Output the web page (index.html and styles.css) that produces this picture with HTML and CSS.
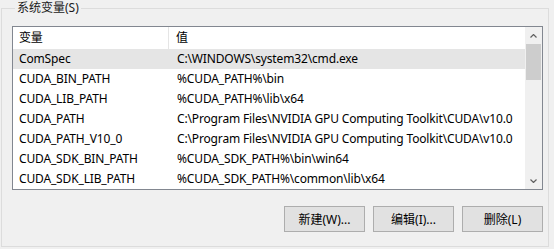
FILE: index.html
```html
<!DOCTYPE html>
<html lang="zh-CN">

<head>
  <meta charset="UTF-8">
  <meta name="viewport" content="width=device-width, initial-scale=1.0">
  <title>系统变量</title>
  <link rel="stylesheet" href="styles.css">
</head>

<body>
  <fieldset class="group">
    <legend>系统变量(S)</legend>

    <div class="list">
      <div class="view">
        <div class="row head">
          <div class="cell name">变量</div>
          <div class="cell value">值</div>
        </div>
        <div class="row selected">
          <div class="cell name">ComSpec</div>
          <div class="cell value">C:\WINDOWS\system32\cmd.exe</div>
        </div>
        <div class="row">
          <div class="cell name">CUDA_BIN_PATH</div>
          <div class="cell value">%CUDA_PATH%\bin</div>
        </div>
        <div class="row">
          <div class="cell name">CUDA_LIB_PATH</div>
          <div class="cell value">%CUDA_PATH%\lib\x64</div>
        </div>
        <div class="row">
          <div class="cell name">CUDA_PATH</div>
          <div class="cell value">C:\Program Files\NVIDIA GPU Computing Toolkit\CUDA\v10.0</div>
        </div>
        <div class="row">
          <div class="cell name">CUDA_PATH_V10_0</div>
          <div class="cell value">C:\Program Files\NVIDIA GPU Computing Toolkit\CUDA\v10.0</div>
        </div>
        <div class="row">
          <div class="cell name">CUDA_SDK_BIN_PATH</div>
          <div class="cell value">%CUDA_SDK_PATH%\bin\win64</div>
        </div>
        <div class="row">
          <div class="cell name">CUDA_SDK_LIB_PATH</div>
          <div class="cell value">%CUDA_SDK_PATH%\common\lib\x64</div>
        </div>
      </div>

      <div class="scrollbar">
        <div class="arrow">
          <svg width="7" height="4" viewBox="0 0 7 4"><path d="M0.5 3.5 L3.5 0.5 L6.5 3.5" fill="none" stroke="#606060" stroke-width="1.2"/></svg>
        </div>
        <div class="track">
          <div class="thumb"></div>
        </div>
        <div class="arrow">
          <svg width="7" height="4" viewBox="0 0 7 4"><path d="M0.5 0.5 L3.5 3.5 L6.5 0.5" fill="none" stroke="#606060" stroke-width="1.2"/></svg>
        </div>
      </div>
    </div>

    <div class="buttons">
      <button type="button">新建(W)...</button>
      <button type="button">编辑(I)...</button>
      <button type="button">删除(L)</button>
    </div>
  </fieldset>
</body>

</html>
```

FILE: styles.css
```css
body {
  margin: 0;
  width: 554px;
  height: 249px;
  overflow: hidden;
  background-color: #f0f0f0;
  font-family: "Noto Sans", "Noto Sans CJK SC", sans-serif;
  font-size: 12px;
  color: #000;
}

.group {
  box-sizing: border-box;
  width: 548px;
  height: 247px;
  margin: 0 0 0 1px;
  padding: 10px 5px 13px 10px;
  border: 1px solid #dcdcdc;
}

.group legend {
  margin-left: 3px;
  padding: 0 2px;
  line-height: 16px;
  color: #1a1a1a;
}

.list {
  display: flex;
  height: 164px;
  border: 1px solid #828790;
  background-color: #fff;
  box-sizing: border-box;
}

.view {
  flex: 1;
  overflow: hidden;
}

.row {
  display: flex;
  height: 20px;
  line-height: 20px;
  white-space: nowrap;
  letter-spacing: -0.15px;
}

.row.head {
  height: 22px;
  line-height: 22px;
}

.row.selected {
  background-color: #e5e5e5;
}

.cell.name {
  width: 156px;
  padding-left: 6px;
  box-sizing: border-box;
}

.cell.value {
  padding-left: 8px;
}

.head .cell.name {
  border-right: 1px solid #e5e5e5;
}

.head .cell.value {
  padding-left: 7px;
}

.scrollbar {
  display: flex;
  flex-direction: column;
  width: 17px;
  background-color: #f0f0f0;
}

.arrow {
  display: flex;
  align-items: center;
  justify-content: center;
  height: 17px;
}

.track {
  flex: 1;
  padding: 0 1px;
}

.thumb {
  height: 36px;
  background-color: #cdcdcd;
}

.buttons {
  display: flex;
  justify-content: flex-end;
  gap: 8px;
  margin-top: 16px;
}

.buttons button {
  width: 81px;
  height: 26px;
  padding: 0;
  font-family: inherit;
  font-size: 12px;
  color: #000;
  background-color: #e1e1e1;
  border: 1px solid #adadad;
  border-radius: 0;
}
```
